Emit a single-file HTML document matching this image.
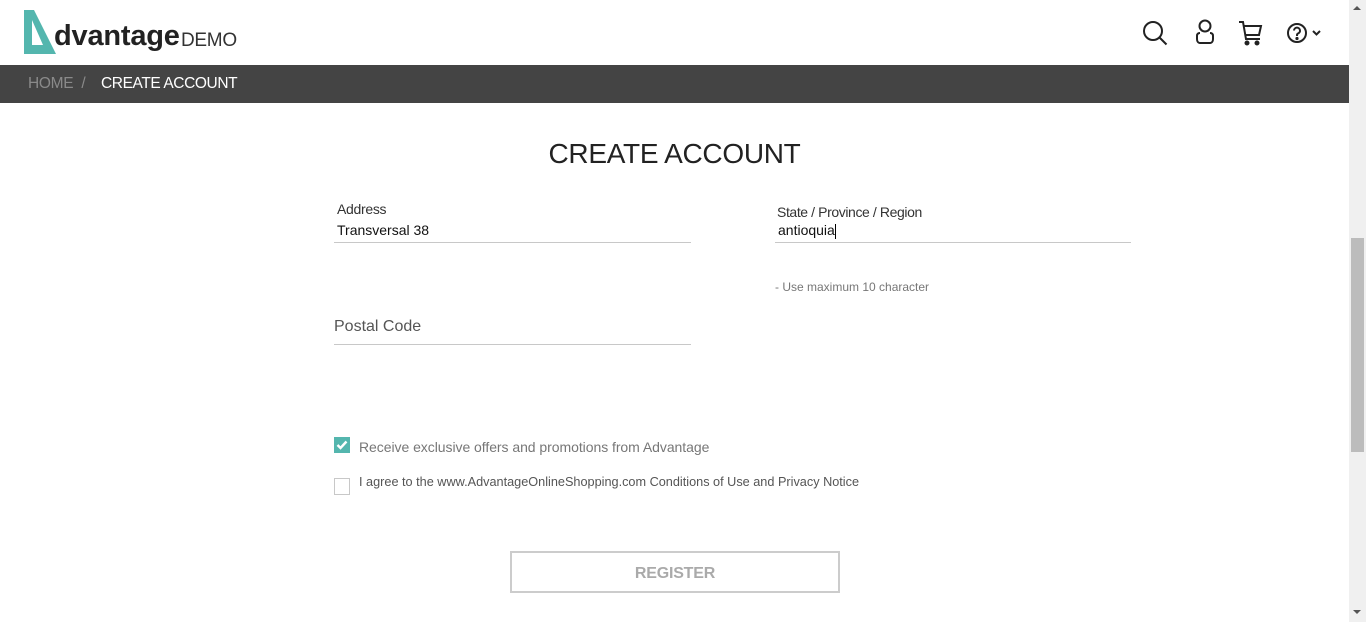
<!DOCTYPE html>
<html><head><meta charset="utf-8"><style>
*{margin:0;padding:0;box-sizing:border-box}
body{width:1366px;height:622px;overflow:hidden;background:#fff;font-family:"Liberation Sans",sans-serif;position:relative;color:#222}
.a{position:absolute}
.sb{left:1349px;top:0;width:17px;height:622px;background:#f0f0f0}
.th{left:1351px;top:238px;width:13px;height:214px;background:#bcbcbc}
.bar{left:0;top:65px;width:1349px;height:38px;background:#444}
.line{height:1px;background:#c8c8c8}
.lbl{font-size:14px;color:#333}
</style></head><body>
<svg class="a" style="left:23px;top:10px" width="34" height="45" viewBox="0 0 34 45"><path fill-rule="evenodd" d="M1 0h10l22 44H1z M9 10v25h11z" fill="#54b6ae"/></svg>
<div class="a" style="left:54px;top:20px;font-size:29px;font-weight:bold;color:#222;letter-spacing:-0.2px">dvantage</div>
<div class="a" style="left:181px;top:30px;font-size:19px;color:#333;letter-spacing:-0.3px">DEMO</div>

<svg class="a" style="left:1142px;top:20px" width="28" height="26" viewBox="0 0 28 26" fill="none" stroke="#222" stroke-width="2"><circle cx="11" cy="11" r="9"/><path d="M17.5 17.5l7 7"/></svg>
<svg class="a" style="left:1194px;top:19px" width="22" height="26" viewBox="0 0 22 26" fill="none" stroke="#222" stroke-width="2"><circle cx="11" cy="7" r="5.5"/><path d="M3 17c0-2 1-3 3-3M19 17c0-2-1-3-3-3M3 17v3c0 2 1 4 3 4h10c2 0 3-2 3-4v-3"/></svg>
<svg class="a" style="left:1238px;top:20px" width="26" height="26" viewBox="0 0 26 26" fill="none" stroke="#222" stroke-width="2"><path d="M1 2h4l3 17h14M6 6h17l-2 9H7"/><circle cx="9" cy="23" r="1.5" fill="#222"/><circle cx="19" cy="23" r="1.5" fill="#222"/></svg>
<svg class="a" style="left:1286px;top:22px" width="40" height="22" viewBox="0 0 40 22" fill="none" stroke="#222" stroke-width="2"><circle cx="11" cy="11" r="9"/><path d="M8 8.5a3 3 0 1 1 4 3c-1 .5-1 1-1 2.5" /><circle cx="11" cy="16.5" r="0.6" fill="#222"/><path d="M27 9l3.5 3.5L34 9"/></svg>

<div class="a bar"></div>
<div class="a" style="left:28px;top:75px;font-size:15.5px;color:#8a8a8a;letter-spacing:-0.3px">HOME &nbsp;/</div>
<div class="a" style="left:101px;top:75px;font-size:15.5px;color:#fff;letter-spacing:-0.4px">CREATE ACCOUNT</div>

<div class="a" style="left:0;width:1349px;top:138px;text-align:center;font-size:28px;color:#222;letter-spacing:-0.3px">CREATE ACCOUNT</div>

<div class="a lbl" style="left:337px;top:201px;letter-spacing:-0.3px">Address</div>
<div class="a" style="left:337px;top:222px;font-size:14px;color:#111">Transversal 38</div>
<div class="a line" style="left:334px;top:242px;width:357px"></div>

<div class="a lbl" style="left:777px;top:204px;letter-spacing:-0.4px">State / Province / Region</div>
<div class="a" style="left:778px;top:222px;font-size:14px;color:#111">antioquia<span style="display:inline-block;width:1px;height:15px;background:#000;vertical-align:middle"></span></div>
<div class="a line" style="left:775px;top:242px;width:356px"></div>
<div class="a" style="left:775px;top:280px;font-size:12px;color:#777">- Use maximum 10 character</div>

<div class="a" style="left:334px;top:318px;font-size:16px;color:#555">Postal Code</div>
<div class="a line" style="left:334px;top:344px;width:357px"></div>

<div class="a" style="left:334px;top:437px;width:16px;height:16px;background:#54b6ae">
<svg width="16" height="16" viewBox="0 0 16 16"><path d="M3.5 8l3 3 6-6.5" stroke="#fff" stroke-width="2.4" fill="none"/></svg></div>
<div class="a" style="left:359px;top:439px;font-size:14px;color:#777;letter-spacing:-0.05px">Receive exclusive offers and promotions from Advantage</div>
<div class="a" style="left:334px;top:478px;width:16px;height:17px;border:1px solid #c8c8c8"></div>
<div class="a" style="left:359px;top:475px;font-size:12.7px;color:#555">I agree to the www.AdvantageOnlineShopping.com Conditions of Use and Privacy Notice</div>

<div class="a" style="left:510px;top:551px;width:330px;height:42px;border:2px solid #ccc;text-align:center;line-height:41px;font-size:16px;font-weight:bold;color:#aaa;letter-spacing:-0.2px">REGISTER</div>

<div class="a sb"></div>
<div class="a th"></div>
<div class="a" style="left:1353px;top:6px;width:0;height:0;border-left:4px solid transparent;border-right:4px solid transparent;border-bottom:4px solid #555"></div>
<div class="a" style="left:1353px;top:610px;width:0;height:0;border-left:4px solid transparent;border-right:4px solid transparent;border-top:4px solid #555"></div>
</body></html>
